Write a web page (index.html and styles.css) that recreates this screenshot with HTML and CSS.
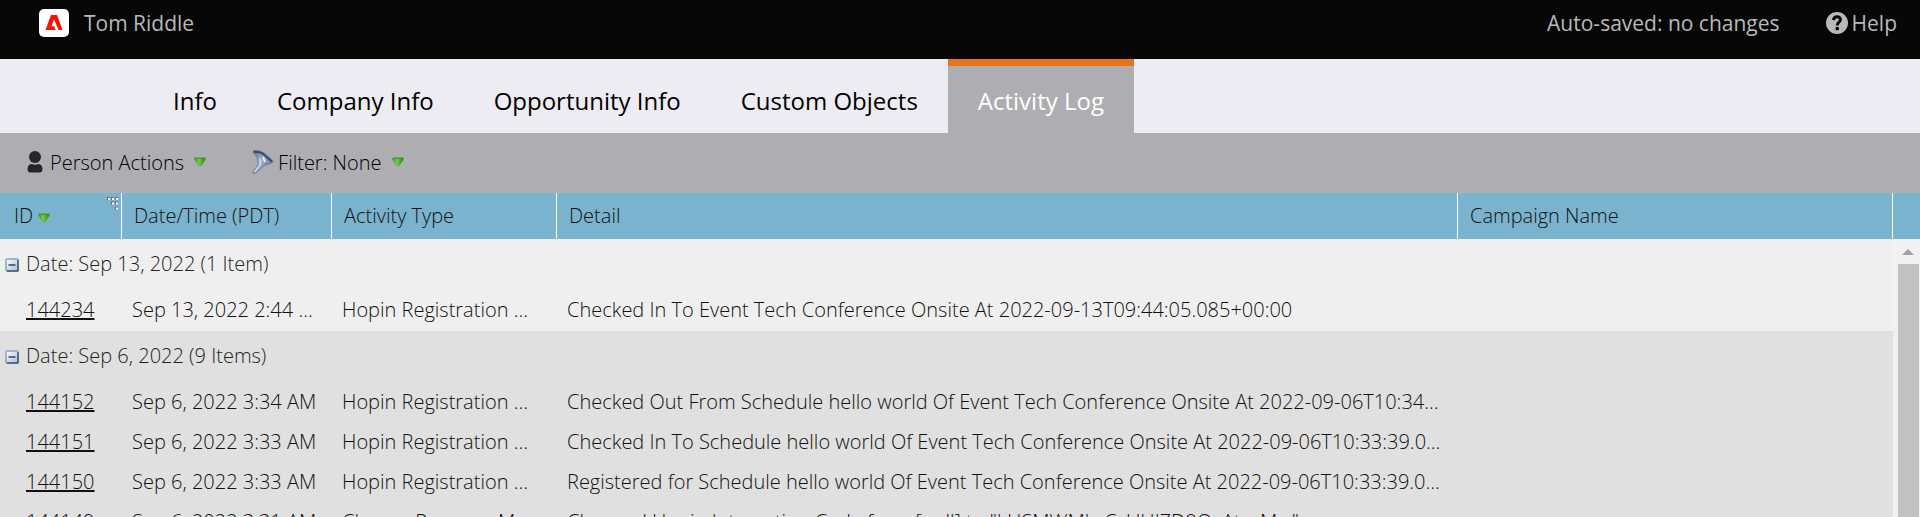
FILE: index.html
```html
<!DOCTYPE html>
<html lang="en">
<head>
  <meta charset="UTF-8" />
  <meta name="viewport" content="width=device-width, initial-scale=1" />
  <title>Tom Riddle - Activity Log</title>
  <link rel="stylesheet" href="styles.css">
</head>
<body>
  <header class="topbar">
    <svg class="logo" viewBox="0 0 30 28" aria-hidden="true">
      <rect width="30" height="28" rx="5" fill="#fff"/>
      <path fill="#fa0f00" d="M12 6h6l5.500 15h-3.800L15 10.500 12.500 17.200h2.800L16.700 21H6.500z"/>
    </svg>
    <span class="person">Tom Riddle</span>
    <span class="autosave">Auto-saved: no changes</span>
    <a class="help" href="#help">
      <svg viewBox="0 0 22 22" aria-hidden="true">
        <circle cx="11" cy="11" r="11" fill="#b9b9b9"/>
        <path d="M7.500 8.200C7.800 3.600 14.500 3.800 14.400 7.700 14.300 10.300 11.200 10.300 11.200 13.400" fill="none" stroke="#070707" stroke-width="3"/>
        <rect x="9.500" y="15" width="3.500" height="3.200" rx="1" fill="#070707"/>
      </svg>
      Help
    </a>
  </header>

  <nav class="tabs">
    <a href="#info">Info</a>
    <a href="#company">Company Info</a>
    <a href="#opportunity">Opportunity Info</a>
    <a href="#objects">Custom Objects</a>
    <a class="active" href="#log">Activity Log</a>
  </nav>

  <!-- Shared icons -->
  <svg class="defs" aria-hidden="true">
    <defs>
      <linearGradient id="green" x1="0" y1="0" x2="1" y2="0">
        <stop offset="0" stop-color="#3f8f2c"/>
        <stop offset=".4" stop-color="#72cf48"/>
        <stop offset="1" stop-color="#2c7d1b"/>
      </linearGradient>
      <linearGradient id="box" x1="0" y1="0" x2="1" y2="1">
        <stop offset="0" stop-color="#fff"/>
        <stop offset="1" stop-color="#a9bcd3"/>
      </linearGradient>
      <linearGradient id="steel" x1="0" y1="0" x2="1" y2="1">
        <stop offset="0" stop-color="#5b6a85"/>
        <stop offset=".45" stop-color="#a3b4cc"/>
        <stop offset="1" stop-color="#3c4f72"/>
      </linearGradient>
      <symbol id="arrow" viewBox="0 0 12 10">
        <path d="M.5 .8h11v1.700L7.200 9H4.800L.5 2.500z" fill="url(#green)" stroke="#6aa45a" stroke-width=".6"/>
        <path d="M1 1.300h10" stroke="#3c8f2a"/>
      </symbol>
      <symbol id="minus" viewBox="0 0 14 14">
        <rect x="1" y="1" width="12" height="12" rx="1" fill="url(#box)" stroke="#8ba1bd" stroke-width="1.500"/>
        <path d="M2 13h10.500q.5 0 .5-.5V2" fill="none" stroke="#3f597c" stroke-width="1.500"/>
        <path d="M3.500 7h7" stroke="#2e4566" stroke-width="1.500"/>
      </symbol>
    </defs>
  </svg>

  <div class="toolbar">
    <button type="button">
      <svg class="icon-person" viewBox="0 0 16 22" aria-hidden="true">
        <circle cx="8" cy="6" r="6" fill="#262626"/>
        <path d="M.5 19q0-6 4-6 3.500 1.500 7 0 4 0 4 6-.5 2.500-3 2.500h-9q-2.500 0-3-2.500z" fill="#262626"/>
      </svg>
      Person Actions
      <svg class="arrow"><use href="#arrow"/></svg>
    </button>
    <button type="button">
      <svg class="icon-filter" viewBox="0 0 22 24" aria-hidden="true">
        <path d="M1.500 .8Q8-.5 13 3.500T21 11.500Q21 13 19 13.200L12.500 15.500 4 23.200 1 23.500 .8 21.500 5.500 15.500Q7.500 8 1 2.500z" fill="url(#steel)" stroke="#65728a" stroke-width=".7"/>
        <path d="M2 1.800Q9 1.500 13 5.500T20 11.500" fill="none" stroke="#3a4965" stroke-width="2"/>
        <path d="M7.500 8q1.500 4 .3 7.500L3 21.500" fill="none" stroke="#f1f6fc"/>
        <path d="M11 7l2 5" stroke="#f1f6fc" stroke-width="1.500"/>
      </svg>
      Filter: None
      <svg class="arrow"><use href="#arrow"/></svg>
    </button>
  </div>

  <main class="grid">
    <table>
      <colgroup>
        <col class="col-id">
        <col class="col-date">
        <col class="col-type">
        <col class="col-detail">
        <col>
        <col class="col-scroll">
      </colgroup>
      <thead>
        <tr>
          <th>
            ID <svg class="arrow"><use href="#arrow"/></svg>
            <svg class="grip" viewBox="0 0 12 13" aria-hidden="true">
              <path d="M0 1.500h12M4 6h8M8 11h4" stroke="#6f6f6f" stroke-width="3" stroke-dasharray="3 1"/>
              <path d="M1 2h11M5 6.500h7M9 11.500h3" stroke="#fff" stroke-width="2" stroke-dasharray="2 2"/>
            </svg>
          </th>
          <th>Date/Time (PDT)</th>
          <th>Activity Type</th>
          <th>Detail</th>
          <th>Campaign Name</th>
          <th></th>
        </tr>
      </thead>
      <tbody>
        <tr class="group">
          <td colspan="5"><svg class="minus"><use href="#minus"/></svg>Date: Sep 13, 2022 (1 Item)</td>
        </tr>
        <tr>
          <td><a href="#144234">144234</a></td>
          <td>Sep 13, 2022 2:44 …</td>
          <td>Hopin Registration …</td>
          <td>Checked In To Event Tech Conference Onsite At 2022-09-13T09:44:05.085+00:00</td>
          <td></td>
        </tr>
      </tbody>
      <tbody class="alt">
        <tr class="group">
          <td colspan="5"><svg class="minus"><use href="#minus"/></svg>Date: Sep 6, 2022 (9 Items)</td>
        </tr>
        <tr>
          <td><a href="#144152">144152</a></td>
          <td>Sep 6, 2022 3:34 AM</td>
          <td>Hopin Registration …</td>
          <td>Checked Out From Schedule hello world Of Event Tech Conference Onsite At 2022-09-06T10:34…</td>
          <td></td>
        </tr>
        <tr>
          <td><a href="#144151">144151</a></td>
          <td>Sep 6, 2022 3:33 AM</td>
          <td>Hopin Registration …</td>
          <td>Checked In To Schedule hello world Of Event Tech Conference Onsite At 2022-09-06T10:33:39.0…</td>
          <td></td>
        </tr>
        <tr>
          <td><a href="#144150">144150</a></td>
          <td>Sep 6, 2022 3:33 AM</td>
          <td>Hopin Registration …</td>
          <td>Registered for Schedule hello world Of Event Tech Conference Onsite At 2022-09-06T10:33:39.0…</td>
          <td></td>
        </tr>
        <tr>
          <td><a href="#144149">144149</a></td>
          <td>Sep 6, 2022 3:31 AM</td>
          <td>Change Program M…</td>
          <td>Changed Hopin Integration Code from [null] to "LHSMWMhrCzUHJZD8OxAtxcMw"</td>
          <td></td>
        </tr>
      </tbody>
    </table>
    <div class="scrollbar" aria-hidden="true">
      <span class="up"></span>
      <span class="thumb"></span>
    </div>
  </main>
</body>
</html>
```
FILE: styles.css
```css
* {
  box-sizing: border-box;
}
html, body {
  height: 100%;
}
body {
  display: flex;
  flex-direction: column;
  margin: 0;
  overflow: hidden;
  font-family: "Open Sans", sans-serif;
  font-size: 20px;
  color: #111;
  background: #efefef;
}
a {
  color: inherit;
}
.defs {
  position: absolute;
  width: 0;
  height: 0;
}
/* Black bar on top */
.topbar {
  display: flex;
  flex: none;
  align-items: center;
  height: 59px;
  padding: 0 23px 13px 39px;
  font-size: 21px;
  color: #b9b9b9;
  background: #070707;
}
.logo {
  width: 30px;
  height: 28px;
  margin-right: 15px;
}
.autosave {
  margin-left: auto;
}
.help {
  display: flex;
  align-items: center;
  gap: 4px;
  margin-left: 46px;
  text-decoration: none;
}
.help svg {
  width: 22px;
  height: 22px;
}
/* Tabs */
.tabs {
  display: flex;
  flex: none;
  height: 74px;
  padding-left: 143px;
  background: #edecf2;
}
.tabs a {
  padding: 18px 30px 0;
  border-top: 7px solid transparent;
  font-size: 24px;
  line-height: 34px;
  color: #000;
  text-decoration: none;
}
.tabs .active {
  color: #fff;
  background: #aeadb2;
  border-top-color: #e87518;
}
/* Toolbar */
.toolbar {
  display: flex;
  flex: none;
  gap: 46px;
  height: 60px;
  padding: 0 0 2px 27px;
  background: #aeadb2;
}
.toolbar button {
  display: flex;
  align-items: center;
  padding: 0;
  border: 0;
  font: inherit;
  font-weight: 300;
  color: #000;
  background: none;
}
.icon-person {
  width: 16px;
  height: 22px;
  margin-right: 7px;
}
.icon-filter {
  width: 22px;
  height: 24px;
  margin-right: 4px;
}
.arrow {
  width: 12px;
  height: 10px;
}
.toolbar .arrow {
  margin-left: 10px;
}
/* Activity grid */
.grid {
  position: relative;
  flex: 1;
  min-height: 0;
  overflow: hidden;
}
table {
  width: 100%;
  table-layout: fixed;
  border-spacing: 0;
  font-weight: 300;
}
.col-id {
  width: 122px;
}
.col-date {
  width: 210px;
}
.col-type {
  width: 225px;
}
.col-detail {
  width: 901px;
}
.col-scroll {
  width: 27px;
}
th {
  position: relative;
  height: 46px;
  padding: 0 12px 2px;
  border-right: 1px solid #fff;
  font-weight: inherit;
  text-align: left;
  background: #7ab3cd;
}
th:first-child {
  padding-left: 14px;
}
th:last-child {
  border-right: 0;
}
.grip {
  position: absolute;
  top: 4px;
  right: 2px;
  width: 12px;
  height: 13px;
}
td {
  height: 40px;
  padding: 0 10px 3px;
  white-space: nowrap;
}
td:first-child {
  padding-left: 26px;
}
.group td {
  height: 52px;
  padding-left: 5px;
  color: #222;
}
.minus {
  width: 14px;
  height: 14px;
  margin-right: 7px;
  vertical-align: -1px;
}
.alt {
  background: #e0e0e0;
}
.scrollbar {
  position: absolute;
  top: 46px;
  right: 0;
  bottom: 0;
  display: flex;
  flex-direction: column;
  align-items: center;
  width: 27px;
  padding: 10px 0 0 3px;
  background: #f1f1f1;
}
.up {
  border: 6px solid transparent;
  border-top: 0;
  border-bottom-color: #a3a3a3;
}
.thumb {
  flex: 1;
  width: 21px;
  margin-top: 9px;
  background: #c1c1c1;
}
```
